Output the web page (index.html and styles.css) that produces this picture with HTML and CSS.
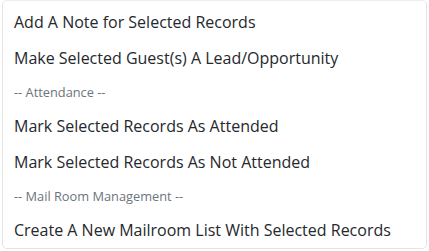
FILE: index.html
```html
<!DOCTYPE html>
<html lang="en">
<head>
    <meta charset="UTF-8">
    <title>Bulk Actions</title>
    <link rel="stylesheet" href="styles.css">
</head>
<body>
<div class="dropdown-menu">
  <a class="dropdown-item" href="#">Add A Note for Selected Records</a>
  <a class="dropdown-item" href="#">Make Selected Guest(s) A Lead/Opportunity</a>
  <h6 class="dropdown-header">-- Attendance --</h6>
  <a class="dropdown-item" href="#">Mark Selected Records As Attended</a>
  <a class="dropdown-item" href="#">Mark Selected Records As Not Attended</a>
  <h6 class="dropdown-header">-- Mail Room Management --</h6>
  <a class="dropdown-item" href="#">Create A New Mailroom List With Selected Records</a>
</div>
</body>
</html>
```

FILE: styles.css
```css
body{
  margin: 0;
  background-color: #fff;
  font-family: "Open Sans", "Noto Sans", sans-serif;
}

.dropdown-menu{
  margin-left: 2px;
  width: 423px;
  padding-top: 3px;
  border: 1px solid #e3e4e8;
  border-top-color: #eceef1;
  border-radius: 5px;
  background-color: #fff;
  display: flex;
  flex-direction: column;
}

.dropdown-item{
  height: 36px;
  padding-left: 11px;
  display: flex;
  align-items: center;
  font-size: 16px;
  color: #25282c;
  text-decoration: none;
  white-space: nowrap;
}

.dropdown-header{
  margin: 0;
  height: 32px;
  padding-left: 11px;
  display: flex;
  align-items: center;
  font-size: 12.8px;
  font-weight: normal;
  color: #6c757d;
}
```
